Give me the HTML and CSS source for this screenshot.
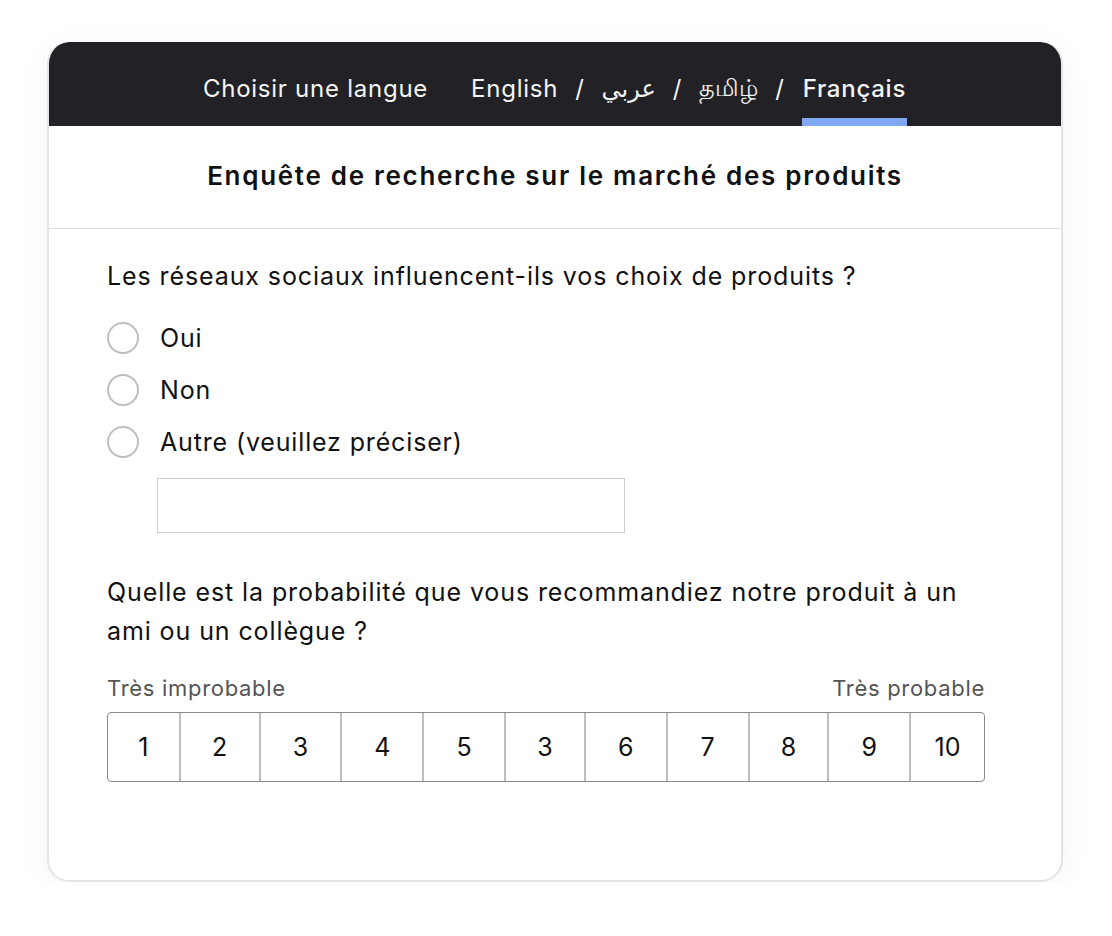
FILE: index.html
```html
<!DOCTYPE html>
<html lang="fr">
<head>
<meta charset="utf-8">
<title>Enquête de recherche sur le marché des produits</title>
<link rel="stylesheet" href="styles.css">
</head>
<body>
<div class="card">
  <nav class="lang-bar">
    <span class="lang-label">Choisir une langue</span>
    <ul class="lang-list">
      <li class="lang">English</li>
      <li class="sep">/</li>
      <li class="lang script" lang="ar">عربي</li>
      <li class="sep">/</li>
      <li class="lang script" lang="ta">தமிழ்</li>
      <li class="sep">/</li>
      <li class="lang active">Français</li>
    </ul>
  </nav>
  <h1 class="title">Enquête de recherche sur le marché des produits</h1>
  <div class="body">
    <p class="question">Les réseaux sociaux influencent-ils vos choix de produits ?</p>
    <ul class="options">
      <li class="option"><span class="radio"></span><span class="option-label">Oui</span></li>
      <li class="option"><span class="radio"></span><span class="option-label">Non</span></li>
      <li class="option"><span class="radio"></span><span class="option-label">Autre (veuillez préciser)</span></li>
    </ul>
    <div class="other-input"></div>
    <p class="question q2">Quelle est la probabilité que vous recommandiez notre produit à un ami ou un collègue ?</p>
    <div class="scale-labels"><span>Très improbable</span><span>Très probable</span></div>
    <div class="scale">
      <span class="cell">1</span>
      <span class="cell">2</span>
      <span class="cell">3</span>
      <span class="cell">4</span>
      <span class="cell">5</span>
      <span class="cell">3</span>
      <span class="cell">6</span>
      <span class="cell">7</span>
      <span class="cell">8</span>
      <span class="cell">9</span>
      <span class="cell">10</span>
    </div>
  </div>
</div>
</body>
</html>
```
FILE: styles.css
```css
* { box-sizing: border-box; }
html, body { margin: 0; padding: 0; background: #ffffff; }
body {
  font-family: Inter, "Noto Sans", "DejaVu Sans", sans-serif;
  color: #111;
  padding: 42px 0 0 47px;
}
.card {
  width: 1016px;
  border: 2px solid #e4e4e4;
  border-top: none;
  border-radius: 22px;
  background: #fff;
  box-shadow: 0 4px 30px rgba(0, 0, 0, 0.05);
  padding-bottom: 98px;
  overflow: hidden;
}
.lang-bar {
  height: 84px;
  margin: 0 -2px;
  background: #222226;
  border-radius: 22px 22px 0 0;
  display: flex;
  justify-content: center;
  align-items: stretch;
  color: #f4f4f4;
  font-size: 24px;
  letter-spacing: 0.75px;
}
.lang-label {
  display: flex;
  align-items: center;
  margin-right: 43px;
  padding-top: 9px;
}
.lang-list {
  list-style: none;
  margin: 0;
  padding: 0;
  display: flex;
  align-items: stretch;
}
.lang-list li {
  display: flex;
  align-items: center;
  padding-top: 9px;
}
.lang.script { letter-spacing: 0; }
.sep { margin: 0 17px; }
.lang.active {
  font-weight: 500;
  border-bottom: 8px solid #7fa8f0;
  padding: 17px 1px 0;
}
.title {
  margin: 0;
  height: 103px;
  padding-bottom: 4px;
  display: flex;
  align-items: center;
  justify-content: center;
  font-size: 26px;
  font-weight: 600;
  letter-spacing: 1.7px;
  border-bottom: 1px solid #dedede;
  color: #111;
}
.body { padding: 31px 76px 0 58px; }
.question {
  margin: 0;
  font-size: 25px;
  letter-spacing: 0.9px;
  line-height: 32px;
  font-weight: 400;
}
.options {
  list-style: none;
  margin: 20px 0 0;
  padding: 0;
}
.option {
  height: 52px;
  display: flex;
  align-items: center;
  font-size: 25px;
  letter-spacing: 0.85px;
}
.radio {
  width: 32px;
  height: 32px;
  border-radius: 50%;
  border: 2px solid #bdbdbd;
  margin-right: 21px;
  flex: none;
}
.other-input {
  margin: 10px 0 0 50px;
  width: 468px;
  height: 55px;
  border: 1px solid #cfcfcf;
  background: #fff;
}
.q2 {
  margin-top: 40px;
  line-height: 39px;
  max-width: 878px;
}
.scale-labels {
  margin-top: 23px;
  display: flex;
  justify-content: space-between;
  font-size: 22px;
  letter-spacing: 0.7px;
  line-height: 28px;
  color: #555;
}
.scale {
  margin-top: 10px;
  height: 70px;
  display: grid;
  grid-template-columns: 71fr 80fr 82fr 82fr 82fr 80fr 82fr 82fr 80fr 82fr 75fr;
  border: 1px solid #8a8a8a;
  border-radius: 4px;
}
.cell {
  display: flex;
  align-items: center;
  justify-content: center;
  font-size: 25px;
  color: #111;
  border-left: 2px solid #bdbdbd;
}
.cell:first-child { border-left: none; }
```
